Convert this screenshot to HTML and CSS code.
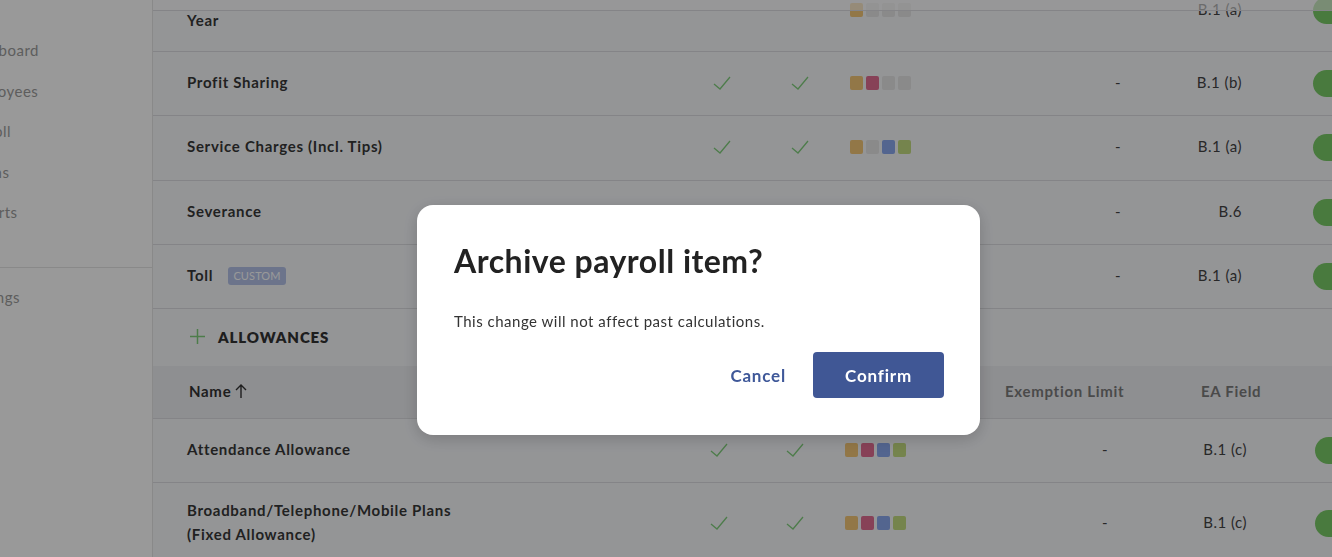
FILE: index.html
```html
<!DOCTYPE html>
<html lang="en">
<head>
<meta charset="utf-8">
<title>Payroll items</title>
<link rel="stylesheet" href="styles.css">
</head>
<body>
<div class="app">
  <aside class="sidebar">
    <nav class="nav">
      <a class="nav-item">Dashboard</a>
      <a class="nav-item">Employees</a>
      <a class="nav-item">Payroll</a>
      <a class="nav-item">Claims</a>
      <a class="nav-item">Reports</a>
    </nav>
    <div class="nav-sep"></div>
    <a class="nav-item">Settings</a>
  </aside>

  <main class="main">
    <div class="band"></div>

    <section class="table upper">
      <div class="row first">
        <div class="name name-bottom">Year</div>
        <div class="sq"><i class="y"></i><i class="g"></i><i class="g"></i><i class="g"></i></div>
        <div class="ea">B.1 (a)</div>
        <div class="tg"><span class="toggle"></span></div>
      </div>
      <div class="row">
        <div class="name">Profit Sharing</div>
        <div class="c1"><svg class="check" viewBox="0 0 18 14"><path d="M1 8 L7 13 L17 1"/></svg></div>
        <div class="c2"><svg class="check" viewBox="0 0 18 14"><path d="M1 8 L7 13 L17 1"/></svg></div>
        <div class="sq"><i class="y"></i><i class="r"></i><i class="g"></i><i class="g"></i></div>
        <div class="ex">-</div>
        <div class="ea">B.1 (b)</div>
        <div class="tg"><span class="toggle"></span></div>
      </div>
      <div class="row">
        <div class="name">Service Charges (Incl. Tips)</div>
        <div class="c1"><svg class="check" viewBox="0 0 18 14"><path d="M1 8 L7 13 L17 1"/></svg></div>
        <div class="c2"><svg class="check" viewBox="0 0 18 14"><path d="M1 8 L7 13 L17 1"/></svg></div>
        <div class="sq"><i class="y"></i><i class="g"></i><i class="b"></i><i class="o"></i></div>
        <div class="ex">-</div>
        <div class="ea">B.1 (a)</div>
        <div class="tg"><span class="toggle"></span></div>
      </div>
      <div class="row">
        <div class="name">Severance</div>
        <div class="c1"><svg class="check" viewBox="0 0 18 14"><path d="M1 8 L7 13 L17 1"/></svg></div>
        <div class="sq"><i class="y"></i><i class="g"></i><i class="g"></i><i class="g"></i></div>
        <div class="ex">-</div>
        <div class="ea">B.6</div>
        <div class="tg"><span class="toggle"></span></div>
      </div>
      <div class="row">
        <div class="name">Toll <span class="badge">CUSTOM</span></div>
        <div class="c1"><svg class="check" viewBox="0 0 18 14"><path d="M1 8 L7 13 L17 1"/></svg></div>
        <div class="c2"><svg class="check" viewBox="0 0 18 14"><path d="M1 8 L7 13 L17 1"/></svg></div>
        <div class="sq"><i class="y"></i><i class="g"></i><i class="b"></i><i class="o"></i></div>
        <div class="ex">-</div>
        <div class="ea">B.1 (a)</div>
        <div class="tg"><span class="toggle"></span></div>
      </div>
    </section>

    <div class="section-head">
      <svg class="plus" viewBox="0 0 16 16"><path d="M8 0 V16 M0 8 H16"/></svg>
      <span>ALLOWANCES</span>
    </div>

    <section class="table lower">
      <div class="row head">
        <div class="name">Name <svg class="arrow" viewBox="0 0 12 14"><path d="M6 14 V1 M1 6 L6 1 L11 6"/></svg></div>
        <div class="c1">Taxable</div>
        <div class="ex">Exemption Limit</div>
        <div class="ea">EA Field</div>
      </div>
      <div class="row">
        <div class="name">Attendance Allowance</div>
        <div class="c1"><svg class="check" viewBox="0 0 18 14"><path d="M1 8 L7 13 L17 1"/></svg></div>
        <div class="c2"><svg class="check" viewBox="0 0 18 14"><path d="M1 8 L7 13 L17 1"/></svg></div>
        <div class="sq"><i class="y"></i><i class="r"></i><i class="b"></i><i class="o"></i></div>
        <div class="ex">-</div>
        <div class="ea">B.1 (c)</div>
        <div class="tg"><span class="toggle"></span></div>
      </div>
      <div class="row tall">
        <div class="name">Broadband/Telephone/Mobile Plans (Fixed Allowance)</div>
        <div class="c1"><svg class="check" viewBox="0 0 18 14"><path d="M1 8 L7 13 L17 1"/></svg></div>
        <div class="c2"><svg class="check" viewBox="0 0 18 14"><path d="M1 8 L7 13 L17 1"/></svg></div>
        <div class="sq"><i class="y"></i><i class="r"></i><i class="b"></i><i class="o"></i></div>
        <div class="ex">-</div>
        <div class="ea">B.1 (c)</div>
        <div class="tg"><span class="toggle"></span></div>
      </div>
    </section>
  </main>
</div>

<div class="backdrop"></div>

<div class="modal" role="dialog">
  <h2 class="modal-title">Archive payroll item?</h2>
  <p class="modal-text">This change will not affect past calculations.</p>
  <div class="modal-actions">
    <button class="btn btn-text">Cancel</button>
    <button class="btn btn-primary">Confirm</button>
  </div>
</div>
</body>
</html>
```

FILE: styles.css
```css
body {
  margin: 0;
  font-family: Lato, "Liberation Sans", sans-serif;
  letter-spacing: 0.5px;
  color: #3a3a3a;
}

.app {
  display: flex;
  height: 557px;
  overflow: hidden;
}

/* Sidebar */
.sidebar {
  flex: 0 0 152px;
  background: #fff;
  border-right: 1px solid #e4e4e4;
  overflow: hidden;
}
.nav {
  padding-top: 30px;
}
.nav-item {
  display: block;
  height: 40.5px;
  line-height: 40.5px;
  margin-left: -37px;
  font-size: 15px;
  color: #9c9c9c;
  white-space: nowrap;
}
.nav-sep {
  margin: 34px 0 9px;
  border-top: 1px solid #e4e4e4;
}

/* Main */
.main {
  flex: 1;
  min-width: 0;
  position: relative;
  background: #f7f8fb;
  overflow: hidden;
}
.band {
  position: absolute;
  top: 0;
  left: 0;
  right: 0;
  height: 10px;
  background: rgba(255, 255, 255, 0.6);
  border-bottom: 1px solid #dcdde1;
  z-index: 1;
}

.row {
  display: grid;
  align-items: center;
  box-sizing: border-box;
  height: 64.25px;
  padding-left: 34px;
  border-top: 1px solid #dcdde1;
  font-size: 15px;
}
.upper .row {
  grid-template-columns: [name] 513px [c1] 44px 34px [c2] 44px 28px [sq] 61px 89px [ex] 123px 67px [ea] 55px 68px [tg] 50px;
}
.lower .row {
  grid-template-columns: [name] 510px [c1] 44px 32px [c2] 44px 28px [sq] 61px 94px [ex] 127px 70px [ea] 68px 50px [tg] 50px;
}
.upper {
  margin-top: -31px;
}
.upper .row.first {
  height: 82px;
  border-top: 0;
}
.row.tall {
  height: 82px;
}

.name {
  grid-column-start: name;
  max-width: 290px;
  margin-bottom: 3px;
  font-weight: 700;
  letter-spacing: 0.7px;
  line-height: 24px;
  color: #383838;
}
.name-bottom {
  align-self: end;
  margin-bottom: 0;
  padding-bottom: 19px;
}
.c1 { grid-column-start: c1; justify-self: center; display: flex; margin-bottom: 1px; }
.c2 { grid-column-start: c2; justify-self: center; display: flex; margin-bottom: 1px; }
.sq {
  grid-column-start: sq;
  display: flex;
  gap: 3px;
  margin-bottom: 1px;
}
.sq i {
  width: 13px;
  height: 14px;
  border-radius: 2px;
  background: #e6e6e6;
}
.sq .y { background: #f3c677; }
.sq .r { background: #e26d92; }
.sq .b { background: #8aa8ee; }
.sq .o { background: #c4dc80; }
.sq .g { background: #e6e6e6; }

.ex {
  grid-column-start: ex;
  justify-self: end;
  padding-right: 2px;
  margin-bottom: 3px;
  color: #444;
}
.lower .ex { padding-right: 19px; }
.ea {
  grid-column-start: ea;
  justify-self: end;
  padding-right: 3px;
  margin-bottom: 3px;
  color: #444;
}
.lower .ea { padding-right: 18px; }
.tg { grid-column-start: tg; display: flex; }

.check {
  width: 18px;
  height: 14px;
  fill: none;
  stroke: #80cf7c;
  stroke-width: 1.3;
}
.toggle {
  display: block;
  width: 48px;
  height: 27px;
  border-radius: 14px;
  background: #7bcb68;
}
.badge {
  display: inline-block;
  margin-left: 11px;
  padding: 0 5px;
  height: 18px;
  line-height: 18px;
  border-radius: 3px;
  background: #b4c2e8;
  color: #fff;
  font-size: 11px;
  font-weight: 400;
  letter-spacing: 0.1px;
  vertical-align: 1px;
}

/* Allowances section header */
.section-head {
  display: flex;
  align-items: center;
  gap: 13px;
  box-sizing: border-box;
  height: 58px;
  padding: 0 0 2px 37px;
  border-top: 1px solid #dcdde1;
  font-size: 15px;
  font-weight: 800;
  letter-spacing: 0.9px;
  color: #333;
}
.plus {
  width: 15px;
  height: 15px;
  fill: none;
  stroke: #80cf7c;
  stroke-width: 1.6;
}

.lower .row.head {
  height: 52px;
  border-top: 0;
  background: #edeef2;
  padding-left: 36px;
}
.head .name {
  display: flex;
  align-items: center;
  gap: 4px;
  color: #333;
}
.arrow {
  width: 12px;
  height: 14px;
  fill: none;
  stroke: #333;
  stroke-width: 1.4;
}
.head .c1 { color: #7c7c7c; font-weight: 700; }
.head .ex,
.head .ea {
  justify-self: start;
  padding: 0 0 0 3px;
  color: #7c7c7c;
  font-weight: 700;
  letter-spacing: 0.7px;
}
.head .ea { padding-left: 2px; }

/* Modal */
.backdrop {
  position: fixed;
  inset: 0;
  z-index: 10;
  background: rgba(0, 0, 0, 0.4);
}
.modal {
  position: fixed;
  left: 417px;
  top: 205px;
  z-index: 11;
  width: 563px;
  box-sizing: border-box;
  padding: 37px 36px 37px 37px;
  background: #fff;
  border-radius: 16px;
  box-shadow: 0 4px 16px rgba(0, 0, 0, 0.18);
}
.modal-title {
  margin: 0;
  font-size: 32px;
  line-height: 38px;
  font-weight: 700;
  letter-spacing: 0.5px;
  color: #222;
}
.modal-text {
  margin: 30px 0 20px;
  font-size: 15px;
  line-height: 22px;
  color: #333;
}
.modal-actions {
  display: flex;
  justify-content: flex-end;
  gap: 9px;
}
.btn {
  height: 46px;
  border: 0;
  border-radius: 4px;
  font-family: Lato, "Liberation Sans", sans-serif;
  font-size: 17px;
  font-weight: 700;
  letter-spacing: 0.8px;
  cursor: pointer;
}
.btn-text {
  padding: 0 18px;
  background: none;
  color: #3f5899;
}
.btn-primary {
  width: 131px;
  background: #405795;
  color: #fff;
}
```
